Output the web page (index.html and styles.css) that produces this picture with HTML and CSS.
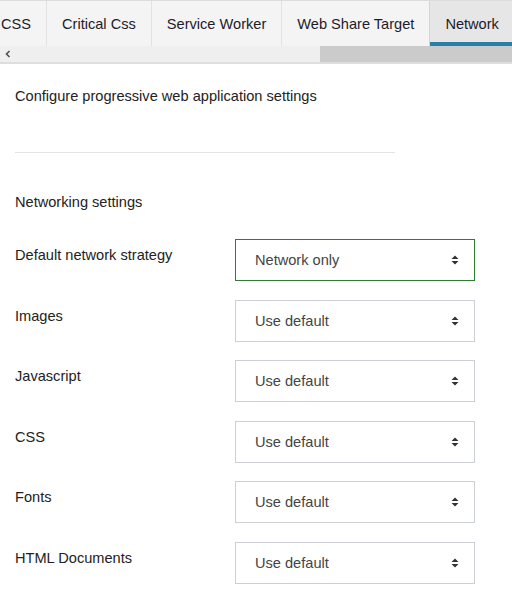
FILE: index.html
```html
<!DOCTYPE html>
<html>
<head>
<meta charset="utf-8">
<link rel="stylesheet" href="styles.css">
</head>
<body>
<div class="tabbar">
  <div class="tabs-viewport">
    <div class="tabs">
      <div class="tab">CSS</div>
      <div class="tab">Critical Css</div>
      <div class="tab">Service Worker</div>
      <div class="tab">Web Share Target</div>
      <div class="tab active">Network</div>
    </div>
  </div>
  <div class="hscroll">
    <span class="arrow"><svg width="8" height="8" viewBox="0 0 8 8"><path d="M5.5 1 L2.5 4 L5.5 7" fill="none" stroke="#505050" stroke-width="1.6"/></svg></span>
    <div class="track"><div class="thumb"></div></div>
  </div>
</div>

<main class="content">
  <p class="intro">Configure progressive web application settings</p>
  <hr class="divider">
  <h3 class="section">Networking settings</h3>

  <div class="rows">
    <div class="row">
      <label class="label">Default network strategy</label>
      <div class="select focused"><span>Network only</span><svg class="sort" width="8" height="10" viewBox="0 0 8 10"><path d="M4 0.5 L7.5 4 L0.5 4 Z M4 9.5 L7.5 6 L0.5 6 Z" fill="#333"/></svg></div>
    </div>
    <div class="row">
      <label class="label">Images</label>
      <div class="select"><span>Use default</span><svg class="sort" width="8" height="10" viewBox="0 0 8 10"><path d="M4 0.5 L7.5 4 L0.5 4 Z M4 9.5 L7.5 6 L0.5 6 Z" fill="#333"/></svg></div>
    </div>
    <div class="row">
      <label class="label">Javascript</label>
      <div class="select"><span>Use default</span><svg class="sort" width="8" height="10" viewBox="0 0 8 10"><path d="M4 0.5 L7.5 4 L0.5 4 Z M4 9.5 L7.5 6 L0.5 6 Z" fill="#333"/></svg></div>
    </div>
    <div class="row">
      <label class="label">CSS</label>
      <div class="select"><span>Use default</span><svg class="sort" width="8" height="10" viewBox="0 0 8 10"><path d="M4 0.5 L7.5 4 L0.5 4 Z M4 9.5 L7.5 6 L0.5 6 Z" fill="#333"/></svg></div>
    </div>
    <div class="row">
      <label class="label">Fonts</label>
      <div class="select"><span>Use default</span><svg class="sort" width="8" height="10" viewBox="0 0 8 10"><path d="M4 0.5 L7.5 4 L0.5 4 Z M4 9.5 L7.5 6 L0.5 6 Z" fill="#333"/></svg></div>
    </div>
    <div class="row">
      <label class="label">HTML Documents</label>
      <div class="select"><span>Use default</span><svg class="sort" width="8" height="10" viewBox="0 0 8 10"><path d="M4 0.5 L7.5 4 L0.5 4 Z M4 9.5 L7.5 6 L0.5 6 Z" fill="#333"/></svg></div>
    </div>
  </div>
</main>
</body>
</html>
```
FILE: styles.css
```css
* { box-sizing: border-box; }
html, body { margin: 0; padding: 0; background: #fff; }
body {
  font-family: "Liberation Sans", Arial, sans-serif;
  font-size: 14.6px;
  color: #222;
  width: 512px;
  overflow: hidden;
}
.tabbar {
  border-top: 1px solid #dcdcdc;
  border-bottom: 2px solid #dedede;
}
.tabs-viewport { overflow: hidden; }
.tabs {
  display: flex;
  margin-left: -14px;
  background: #f4f4f4;
}
.tab {
  flex: none;
  height: 45px;
  padding: 0 15px;
  display: flex;
  align-items: center;
  border-right: 1px solid #e2e2e2;
  color: #1c1c2a;
  white-space: nowrap;
}
.tab:last-child { border-right: 0; }
.tab.active {
  background: #e6e6e6;
  border-bottom: 4px solid #2b7ea8;
  padding-top: 4px;
  width: 82px;
}
.tab:nth-child(4) { border-right-color: #d4d4d4; }
.hscroll {
  display: flex;
  height: 16px;
  background: #efefef;
}
.arrow {
  width: 16px;
  display: flex;
  align-items: center;
  justify-content: center;
}
.track { flex: 1; display: flex; justify-content: flex-end; }
.thumb { width: 192px; background: #cbcbcb; }

.content { padding: 0 15px; }
.intro { margin: 23px 0 0; line-height: 18px; }
.divider {
  width: 380px;
  margin: 47px 0 0;
  border: 0;
  border-top: 1px solid #e4e4e4;
}
.section {
  margin: 40px 0 0;
  font-size: 14.6px;
  font-weight: normal;
  line-height: 18px;
}
.rows {
  display: flex;
  flex-direction: column;
  gap: 18.6px;
  margin-top: 28px;
}
.row {
  display: flex;
  align-items: flex-start;
}
.label {
  width: 220px;
  padding-top: 7px;
  line-height: 18px;
  color: #222;
}
.select {
  width: 240px;
  height: 42px;
  border: 1px solid #ccd0d6;
  display: flex;
  align-items: center;
  justify-content: space-between;
  padding: 0 15px 0 19px;
  color: #444;
}
.select.focused { border-color: #2e7d32; }
.sort { display: block; }
```
